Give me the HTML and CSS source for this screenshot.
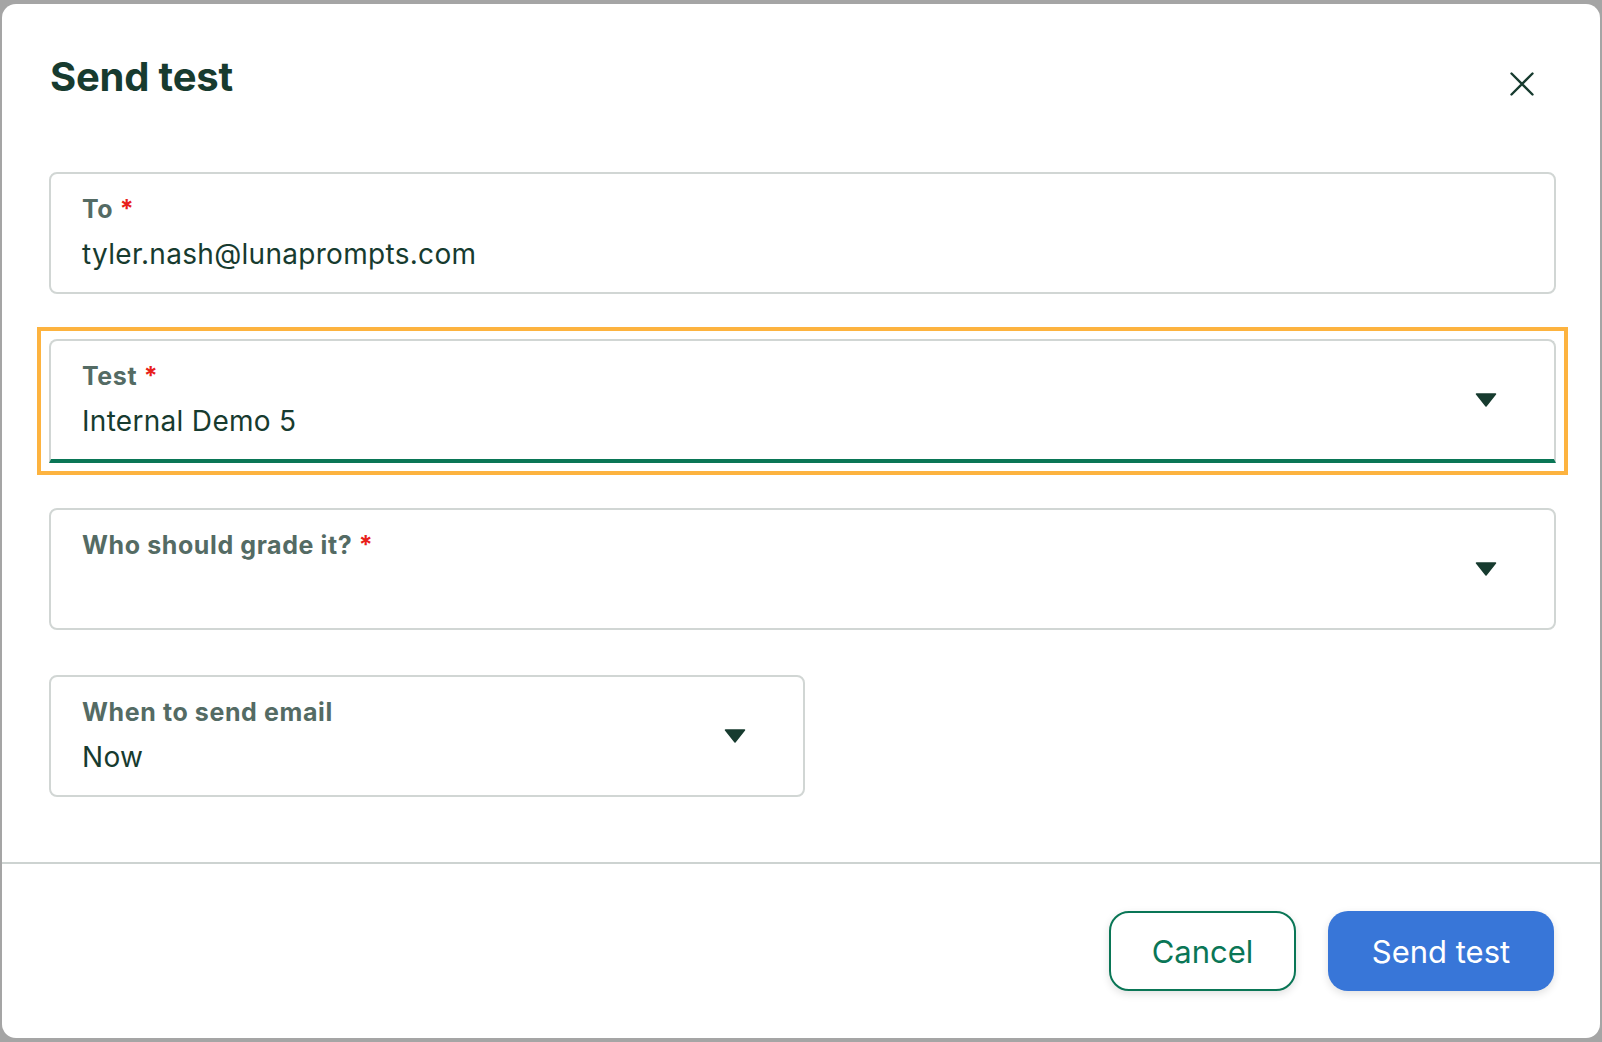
FILE: index.html
```html
<!DOCTYPE html>
<html lang="en">
<head>
    <meta charset="UTF-8">
    <title>Send test</title>
    <link rel="stylesheet" href="styles.css">
</head>
<body>
    <div class="modal">
        <div class="modal-header">
            <h2>Send test</h2>
            <button class="close" type="button" aria-label="Close">
                <svg width="24" height="24" viewBox="0 0 24 24">
                    <path d="M1.5 1.5L22.5 22.5M22.5 1.5L1.5 22.5" stroke="#173b2f" stroke-width="2.4" stroke-linecap="round"/>
                </svg>
            </button>
        </div>

        <form class="modal-body">
            <div class="field">
                <div class="field-text">
                    <label>To <span class="req">*</span></label>
                    <div class="value">tyler.nash@lunaprompts.com</div>
                </div>
            </div>

            <div class="focus-ring">
                <div class="field field-active">
                    <div class="field-text">
                        <label>Test <span class="req">*</span></label>
                        <div class="value">Internal Demo 5</div>
                    </div>
                    <svg class="caret" width="22" height="14" viewBox="0 0 22 14">
                        <path d="M1.5 1H20.5L11 13Z" fill="#173b2f" stroke="#173b2f" stroke-width="1.5" stroke-linejoin="round"/>
                    </svg>
                </div>
            </div>

            <div class="field">
                <div class="field-text">
                    <label>Who should grade it? <span class="req">*</span></label>
                    <div class="value"></div>
                </div>
                <svg class="caret" width="22" height="14" viewBox="0 0 22 14">
                    <path d="M1.5 1H20.5L11 13Z" fill="#173b2f" stroke="#173b2f" stroke-width="1.5" stroke-linejoin="round"/>
                </svg>
            </div>

            <div class="field field-half">
                <div class="field-text">
                    <label>When to send email</label>
                    <div class="value">Now</div>
                </div>
                <svg class="caret" width="22" height="14" viewBox="0 0 22 14">
                    <path d="M1.5 1H20.5L11 13Z" fill="#173b2f" stroke="#173b2f" stroke-width="1.5" stroke-linejoin="round"/>
                </svg>
            </div>
        </form>

        <div class="modal-footer">
            <button type="button" class="btn btn-secondary">Cancel</button>
            <button type="submit" class="btn btn-primary">Send test</button>
        </div>
    </div>
</body>
</html>
```

FILE: styles.css
```css
body {
    margin: 0;
    background-color: #a5a5a5;
    font-family: Inter, "Noto Sans", sans-serif;
    color: #173b2f;
}
.modal {
    margin: 4px 0 0 2px;
    width: 1598px;
    height: 1034px;
    background-color: #ffffff;
    border-radius: 14px;
    display: flex;
    flex-direction: column;
}
.modal-header {
    height: 168px;
    display: flex;
    justify-content: space-between;
    align-items: flex-start;
    padding: 0 66px 0 48px;
    box-sizing: border-box;
}
.modal-header h2 {
    margin: 53px 0 0;
    font-size: 40px;
    line-height: 40px;
    font-weight: 700;
    letter-spacing: -0.2px;
    color: #173b2f;
}
.close {
    margin-top: 68px;
    padding: 0;
    border: none;
    background: none;
    width: 24px;
    height: 24px;
    cursor: pointer;
}
.close svg {
    display: block;
}
.modal-body {
    display: flex;
    flex-direction: column;
    gap: 45px;
    padding: 0 44px 0 47px;
    margin: 0;
}
.field {
    height: 122px;
    box-sizing: border-box;
    border: 2px solid #d1d6d4;
    border-radius: 8px;
    display: flex;
    align-items: center;
    padding: 0 57px 0 31px;
}
.field-text {
    flex: 1;
    align-self: flex-start;
    padding-top: 20px;
}
.field label {
    display: block;
    font-size: 25px;
    line-height: 30px;
    font-weight: 700;
    letter-spacing: 0.6px;
    color: #546b64;
}
.req {
    color: #e8201a;
}
.value {
    margin-top: 13px;
    height: 34px;
    font-size: 28px;
    line-height: 34px;
    letter-spacing: 0.3px;
    color: #173b2f;
}
.caret {
    display: block;
    flex-shrink: 0;
}
.focus-ring {
    outline: 4px solid #fdb33f;
    outline-offset: 8px;
}
.field-active {
    height: 124px;
    border-bottom: 4px solid #0a7656;
    border-radius: 8px 8px 0 0;
}
.field-half {
    width: 756px;
}
.modal-footer {
    margin-top: 65px;
    border-top: 2px solid #cdd3d1;
    display: flex;
    justify-content: flex-end;
    gap: 32px;
    padding: 47px 46px 0 0;
}
.btn {
    height: 80px;
    border-radius: 20px;
    font-family: Inter, "Noto Sans", sans-serif;
    font-size: 31px;
    cursor: pointer;
    box-shadow: 0 3px 8px rgba(0, 0, 0, 0.12);
}
.btn-secondary {
    width: 187px;
    background-color: #ffffff;
    border: 2px solid #0a7656;
    color: #0a7656;
}
.btn-primary {
    width: 226px;
    background-color: #3876d8;
    border: none;
    color: #ffffff;
}
```
